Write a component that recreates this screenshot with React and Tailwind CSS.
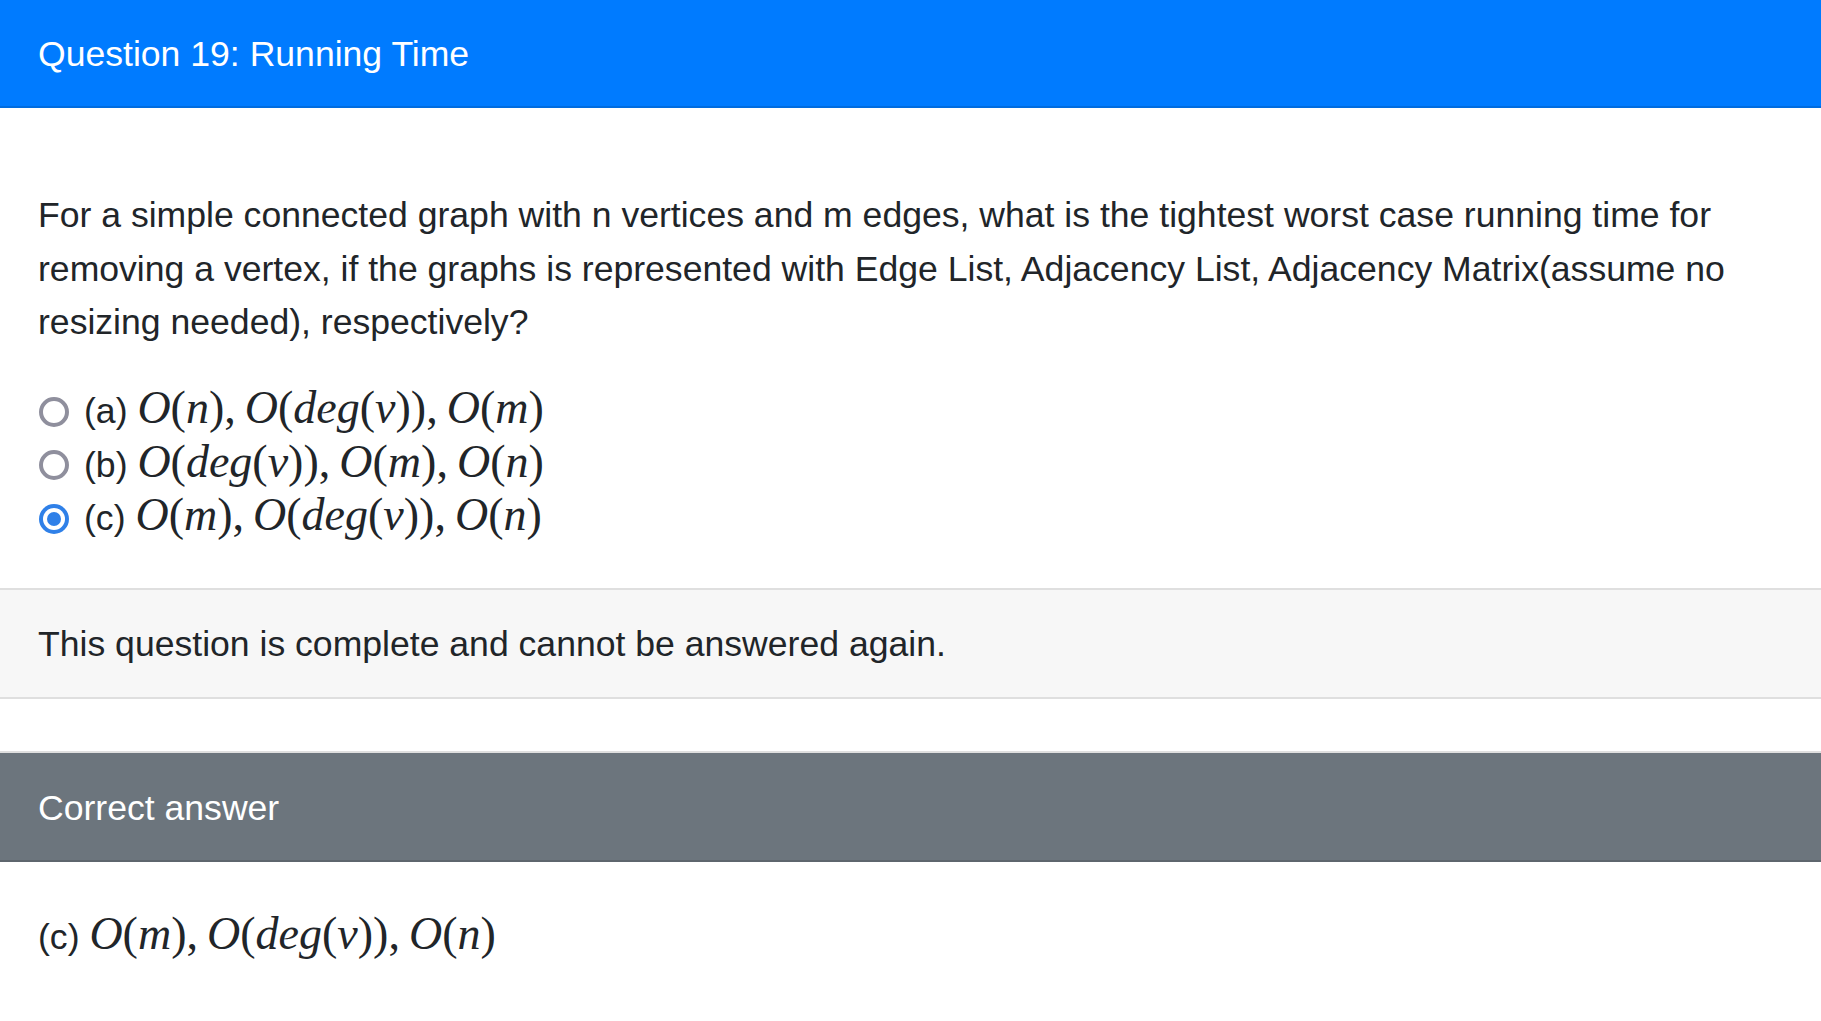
import React from "react";

// KaTeX-ish inline math: letters italic, parens upright, thin space after commas
function Math({ tex }) {
  return (
    <span className="font-['Liberation_Serif',serif] text-[46px] leading-none whitespace-nowrap">
      {tex.split("").map((ch, i) => {
        if (/[a-zA-Z]/.test(ch)) return <i key={i}>{ch}</i>;
        if (ch === ",") return <span key={i} className="mr-[9px]">,</span>;
        return <span key={i}>{ch}</span>;
      })}
    </span>
  );
}

function Radio({ checked }) {
  if (checked) {
    return (
      <span className="ml-[1px] flex h-[30px] w-[30px] flex-shrink-0 items-center justify-center rounded-full bg-[#2f80e8]">
        <span className="flex h-[22px] w-[22px] items-center justify-center rounded-full bg-white">
          <span className="h-[14px] w-[14px] rounded-full bg-[#2f80e8]" />
        </span>
      </span>
    );
  }
  return <span className="ml-[1px] h-[30px] w-[30px] flex-shrink-0 rounded-full border-[4px] border-[#8f8f9d] bg-white" />;
}

const options = [
  { label: "(a)", tex: "O(n),O(deg(v)),O(m)" },
  { label: "(b)", tex: "O(deg(v)),O(m),O(n)" },
  { label: "(c)", tex: "O(m),O(deg(v)),O(n)", checked: true },
];

export default function App() {
  return (
    <div className="min-h-screen bg-white font-['Liberation_Sans',sans-serif] text-[35.6px] leading-[53.4px] text-[#212529]">
      {/* ── Question card ── */}
      <div>
        <div className="border-b-[2.2px] border-[#006cdf] bg-[#007bff] px-[38px] pt-[28px] pb-[24.4px] text-white">
          Question 19: Running Time
        </div>

        <div className="px-[38px] pt-[81.5px] pb-[43px]">
          <p className="mb-[35.6px] pr-[10px]">
            For a simple connected graph with n vertices and m edges, what is the tightest worst case running time for
            removing a vertex, if the graphs is represented with Edge List, Adjacency List, Adjacency Matrix(assume no
            resizing needed), respectively?
          </p>

          <div className="flex flex-col">
            {options.map((o) => (
              <label key={o.label} className="flex h-[53.4px] items-center">
                <Radio checked={o.checked} />
                <span className="ml-[15px]">
                  {o.label} <Math tex={o.tex} />
                </span>
              </label>
            ))}
          </div>
        </div>

        <div className="border-y-[2.2px] border-[#dfdfdf] bg-[#f7f7f7] px-[38px] pt-[27.7px] pb-[25.7px]">
          This question is complete and cannot be answered again.
        </div>
      </div>

      {/* ── Correct answer card ── */}
      <div className="mt-[51.8px] border-t-[2.2px] border-[#dfdfdf]">
        <div className="border-b-[2.2px] border-[#5e666d] bg-[#6c757d] px-[38px] pt-[28.7px] pb-[25.4px] text-white">
          Correct answer
        </div>
        <div className="px-[38px] pt-[48.7px] pb-[44px]">
          <p>
            (c) <Math tex="O(m),O(deg(v)),O(n)" />
          </p>
        </div>
      </div>
    </div>
  );
}
